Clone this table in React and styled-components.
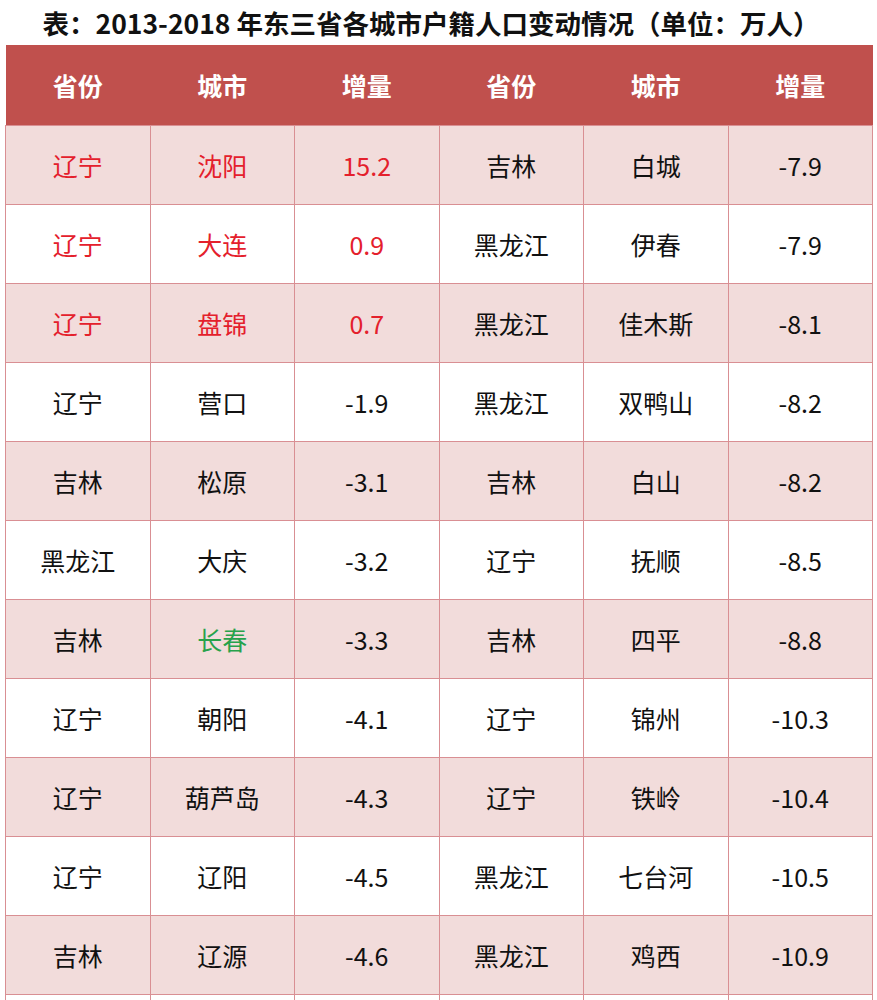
import React from "react";
import styled, { createGlobalStyle } from "styled-components";

const Global = createGlobalStyle`
  html, body { margin: 0; padding: 0; background: #ffffff; }
  body { font-family: "Noto Sans CJK SC", "Noto Sans", sans-serif; }
`;

const Page = styled.div`
  width: 877px;
  padding: 0 4px 0 5px;
  box-sizing: border-box;
`;

const Title = styled.h1`
  margin: 0;
  height: 45px;
  padding-top: 5px;
  box-sizing: border-box;
  padding-right: 16px;
  font-size: 26.5px;
  line-height: 36px;
  font-weight: 700;
  color: #111111;
  text-align: center;
  white-space: nowrap;
`;

const Table = styled.table`
  width: 868px;
  border-collapse: collapse;
  table-layout: fixed;
`;

const HeadCell = styled.th`
  height: 80px;
  padding: 0;
  background: #c0504d;
  color: #ffffff;
  font-size: 25px;
  font-weight: 700;
  text-align: center;
  vertical-align: middle;
`;

const Row = styled.tr`
  background: ${(p) => (p.$shaded ? "#f2dcdb" : "#ffffff")};
`;

const Cell = styled.td`
  height: 78px;
  padding: 0;
  border: 1.5px solid #d98f93;
  text-align: center;
  vertical-align: middle;
  font-size: 25px;
  font-weight: 400;
  color: ${(p) => (p.$tone === "red" ? "#e4202c" : p.$tone === "green" ? "#27a24b" : "#111111")};
`;

const rows = [
  [["辽宁", "red"], ["沈阳", "red"], ["15.2", "red"], ["吉林"], ["白城"], ["-7.9"]],
  [["辽宁", "red"], ["大连", "red"], ["0.9", "red"], ["黑龙江"], ["伊春"], ["-7.9"]],
  [["辽宁", "red"], ["盘锦", "red"], ["0.7", "red"], ["黑龙江"], ["佳木斯"], ["-8.1"]],
  [["辽宁"], ["营口"], ["-1.9"], ["黑龙江"], ["双鸭山"], ["-8.2"]],
  [["吉林"], ["松原"], ["-3.1"], ["吉林"], ["白山"], ["-8.2"]],
  [["黑龙江"], ["大庆"], ["-3.2"], ["辽宁"], ["抚顺"], ["-8.5"]],
  [["吉林"], ["长春", "green"], ["-3.3"], ["吉林"], ["四平"], ["-8.8"]],
  [["辽宁"], ["朝阳"], ["-4.1"], ["辽宁"], ["锦州"], ["-10.3"]],
  [["辽宁"], ["葫芦岛"], ["-4.3"], ["辽宁"], ["铁岭"], ["-10.4"]],
  [["辽宁"], ["辽阳"], ["-4.5"], ["黑龙江"], ["七台河"], ["-10.5"]],
  [["吉林"], ["辽源"], ["-4.6"], ["黑龙江"], ["鸡西"], ["-10.9"]],
  [[""], [""], [""], [""], [""], [""]],
];

const headers = ["省份", "城市", "增量", "省份", "城市", "增量"];

export default function App() {
  return (
    <Page>
      <Global />
      <Title>表：2013-2018 年东三省各城市户籍人口变动情况（单位：万人）</Title>
      <Table>
        <thead>
          <tr>
            {headers.map((h, i) => (
              <HeadCell key={i}>{h}</HeadCell>
            ))}
          </tr>
        </thead>
        <tbody>
          {rows.map((r, i) => (
            <Row key={i} $shaded={i % 2 === 0 && i < 11}>
              {r.map(([t, tone], j) => (
                <Cell key={j} $tone={tone}>{t}</Cell>
              ))}
            </Row>
          ))}
        </tbody>
      </Table>
    </Page>
  );
}
